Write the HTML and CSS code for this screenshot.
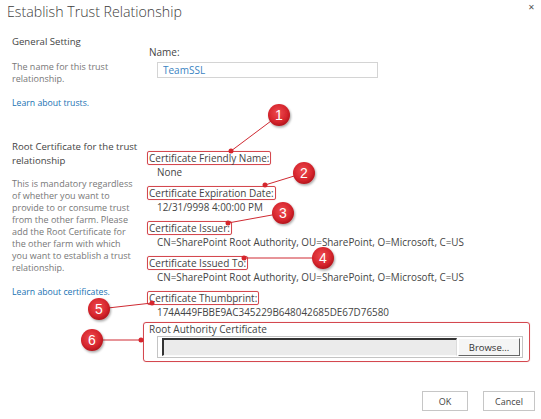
FILE: index.html
```html
<!DOCTYPE html>
<html>
<head>
    <title>Establish Trust Relationship</title>
    <meta name="viewport" content="width=device-width, initial-scale=1">
    <link rel="stylesheet" href="styles.css">
</head>
<body>
    <div class="dialog">
        <div class="dialog-header">
            <h1>Establish Trust Relationship</h1>
            <span class="close">&#x2715;</span>
        </div>

        <div class="section section-general">
            <div class="section-info">
                <h2>General Setting</h2>
                <p>The name for this trust relationship.</p>
                <a href="#">Learn about trusts.</a>
            </div>
            <div class="section-fields">
                <label for="trust-name" class="name-label">Name:</label>
                <input id="trust-name" class="text-input" value="TeamSSL">
            </div>
        </div>

        <div class="section section-cert">
            <div class="section-info">
                <h2>Root Certificate for the trust relationship</h2>
                <p>This is mandatory regardless of whether you want to provide to or consume trust from the other farm. Please add the Root Certificate for the other farm with which you want to establish a trust relationship.</p>
                <a href="#">Learn about certificates.</a>
            </div>
            <div class="section-fields">
                <div class="cert-field">
                    <span class="cert-label">Certificate Friendly Name:</span>
                    <div class="cert-value">None</div>
                </div>
                <div class="cert-field">
                    <span class="cert-label">Certificate Expiration Date:</span>
                    <div class="cert-value">12/31/9998 4:00:00 PM</div>
                </div>
                <div class="cert-field">
                    <span class="cert-label">Certificate Issuer:</span>
                    <div class="cert-value">CN=SharePoint Root Authority, OU=SharePoint, O=Microsoft, C=US</div>
                </div>
                <div class="cert-field">
                    <span class="cert-label">Certificate Issued To:</span>
                    <div class="cert-value">CN=SharePoint Root Authority, OU=SharePoint, O=Microsoft, C=US</div>
                </div>
                <div class="cert-field">
                    <span class="cert-label">Certificate Thumbprint:</span>
                    <div class="cert-value">174A449FBBE9AC345229B648042685DE67D76580</div>
                </div>

                <div class="upload-box">
                    <div class="upload-title">Root Authority Certificate</div>
                    <div class="file-picker">
                        <div class="file-path"></div>
                        <button class="browse-btn">Browse...</button>
                    </div>
                </div>
            </div>
        </div>

        <div class="dialog-buttons">
            <button class="dialog-btn ok-btn">OK</button>
            <button class="dialog-btn">Cancel</button>
        </div>

        <!-- numbered callouts drawn over the dialog -->
        <svg class="callouts" width="541" height="419" viewBox="0 0 541 419">
            <defs>
                <radialGradient id="badge-fill" cx="45%" cy="40%" r="60%">
                    <stop offset="0" stop-color="#ee4a50"/>
                    <stop offset="0.7" stop-color="#d6262d"/>
                    <stop offset="1" stop-color="#b3141c"/>
                </radialGradient>
                <filter id="badge-shadow" x="-30%" y="-30%" width="160%" height="160%">
                    <feDropShadow dx="1" dy="1.5" stdDeviation="1" flood-color="#000" flood-opacity="0.35"/>
                </filter>
            </defs>
            <g class="leader">
                <line x1="231" y1="151" x2="279" y2="115"/>
                <line x1="265" y1="185" x2="304" y2="173"/>
                <line x1="228" y1="223" x2="283" y2="213"/>
                <line x1="244" y1="258" x2="323" y2="258"/>
                <line x1="152" y1="303" x2="99" y2="309"/>
                <line x1="141" y1="340" x2="92" y2="340"/>
            </g>
            <g class="dot">
                <circle cx="231" cy="151" r="2.5"/>
                <circle cx="265" cy="185" r="2.5"/>
                <circle cx="228" cy="223" r="2.5"/>
                <circle cx="244" cy="258" r="2.5"/>
                <circle cx="152" cy="303" r="2.5"/>
                <circle cx="141" cy="340" r="2.5"/>
            </g>
            <g class="badge">
                <circle cx="279" cy="115" r="11"/>
                <circle cx="304" cy="173" r="11"/>
                <circle cx="283" cy="213" r="11"/>
                <circle cx="323" cy="258" r="11"/>
                <circle cx="99" cy="309" r="11"/>
                <circle cx="92" cy="340" r="11"/>
            </g>
            <g class="badge-num">
                <text x="279" y="120">1</text>
                <text x="304" y="178">2</text>
                <text x="283" y="218">3</text>
                <text x="323" y="263">4</text>
                <text x="99" y="314">5</text>
                <text x="92" y="345">6</text>
            </g>
        </svg>
    </div>
</body>
</html>
```

FILE: styles.css
```css
body {
    margin: 0;
    background: #fff;
    font-family: "Open Sans", "Noto Sans", Arial, sans-serif;
    font-size: 10px;
    color: #444;
}
.dialog {
    position: relative;
    width: 541px;
    height: 419px;
}
.dialog-header {
    display: flex;
    justify-content: space-between;
    align-items: flex-start;
    height: 35px;
    padding: 0 6px 0 7px;
    box-sizing: border-box;
}
h1 {
    margin: 2px 0 0;
    font-size: 14.2px;
    font-weight: 300;
    line-height: 20px;
    color: #3c3c3c;
}
.close {
    font-size: 8px;
    line-height: 12px;
    margin-top: 1px;
    color: #555;
}
.section {
    display: grid;
    grid-template-columns: 135px 1fr;
    padding: 0 11px 0 12px;
}
.section-cert {
    margin-top: 30px;
}
h2 {
    margin: 0;
    font-size: 9.6px;
    font-weight: normal;
    line-height: 14px;
    color: #444;
}
.section-info p {
    margin: 12px 0 0;
    width: 121px;
    font-size: 9px;
    line-height: 12px;
    color: #777;
}
.section-cert .section-info p {
    margin-top: 10px;
}
.section-info a {
    display: block;
    margin-top: 11px;
    font-size: 8.7px;
    line-height: 14px;
    color: #2072b3;
    text-decoration: none;
}
.section-general .section-fields {
    padding-top: 10px;
}
.name-label {
    display: block;
    padding-left: 2px;
    font-size: 10px;
    line-height: 14px;
}
.text-input {
    display: block;
    margin: 3px 0 0 10px;
    width: 221px;
    height: 16px;
    box-sizing: border-box;
    padding: 0 5px;
    border: 1px solid #d4d4d4;
    font-family: inherit;
    font-size: 10px;
    color: #3b83c2;
}
.section-cert .section-fields {
    padding-top: 11px;
}
.cert-field {
    margin-bottom: 7px;
}
.cert-label {
    display: block;
    width: fit-content;
    padding: 0 1px;
    height: 14px;
    box-sizing: border-box;
    border: 1px solid #d4484f;
    border-radius: 2px;
    box-shadow: 0 0 1px rgba(200, 30, 40, 0.4);
    font-size: 10px;
    line-height: 12px;
}
.cert-value {
    padding-left: 10px;
    font-size: 9.9px;
    line-height: 14px;
}
.upload-box {
    margin: -4px 0 0 -4px;
    width: 387px;
    height: 40px;
    box-sizing: border-box;
    padding: 0 0 0 5px;
    border: 1px solid #d4484f;
    border-radius: 3px;
    box-shadow: 0 0 1px rgba(200, 30, 40, 0.4);
}
.upload-title {
    font-size: 10px;
    line-height: 13px;
}
.file-picker {
    display: flex;
    align-items: center;
    gap: 1px;
    margin-left: 8px;
    width: 366px;
    height: 22px;
    box-sizing: border-box;
    padding: 0 2px 0 4px;
    border: 1px solid #c4c4c4;
}
.file-path {
    flex: 1;
    height: 18px;
    box-sizing: border-box;
    background: #ebebeb;
    border-top: 2px solid #333;
    border-left: 2px solid #333;
    border-right: 1px solid #dcdcdc;
    border-bottom: 1px solid #fafafa;
}
.browse-btn {
    width: 62px;
    height: 18px;
    padding: 0;
    background: #f5f5f5;
    border: 1px solid;
    border-color: #fff #666 #666 #fff;
    font-family: inherit;
    font-size: 9.5px;
    color: #333;
}
.dialog-buttons {
    display: flex;
    justify-content: flex-end;
    gap: 15px;
    margin-top: 29px;
    padding-right: 6px;
}
.dialog-btn {
    width: 52px;
    height: 20px;
    padding: 0;
    background: #fff;
    border: 1px solid #c6c6c6;
    font-family: inherit;
    font-size: 9px;
    color: #444;
}
.ok-btn {
    width: 46px;
}
.callouts {
    position: absolute;
    top: 0;
    left: 0;
    pointer-events: none;
}
.leader line {
    stroke: #cf2a32;
    stroke-width: 1;
}
.dot circle {
    fill: #d6262d;
}
.badge circle {
    fill: url(#badge-fill);
    filter: url(#badge-shadow);
}
.badge-num text {
    fill: #fff;
    font-family: "Liberation Sans", Arial, sans-serif;
    font-size: 14px;
    text-anchor: middle;
}
```
